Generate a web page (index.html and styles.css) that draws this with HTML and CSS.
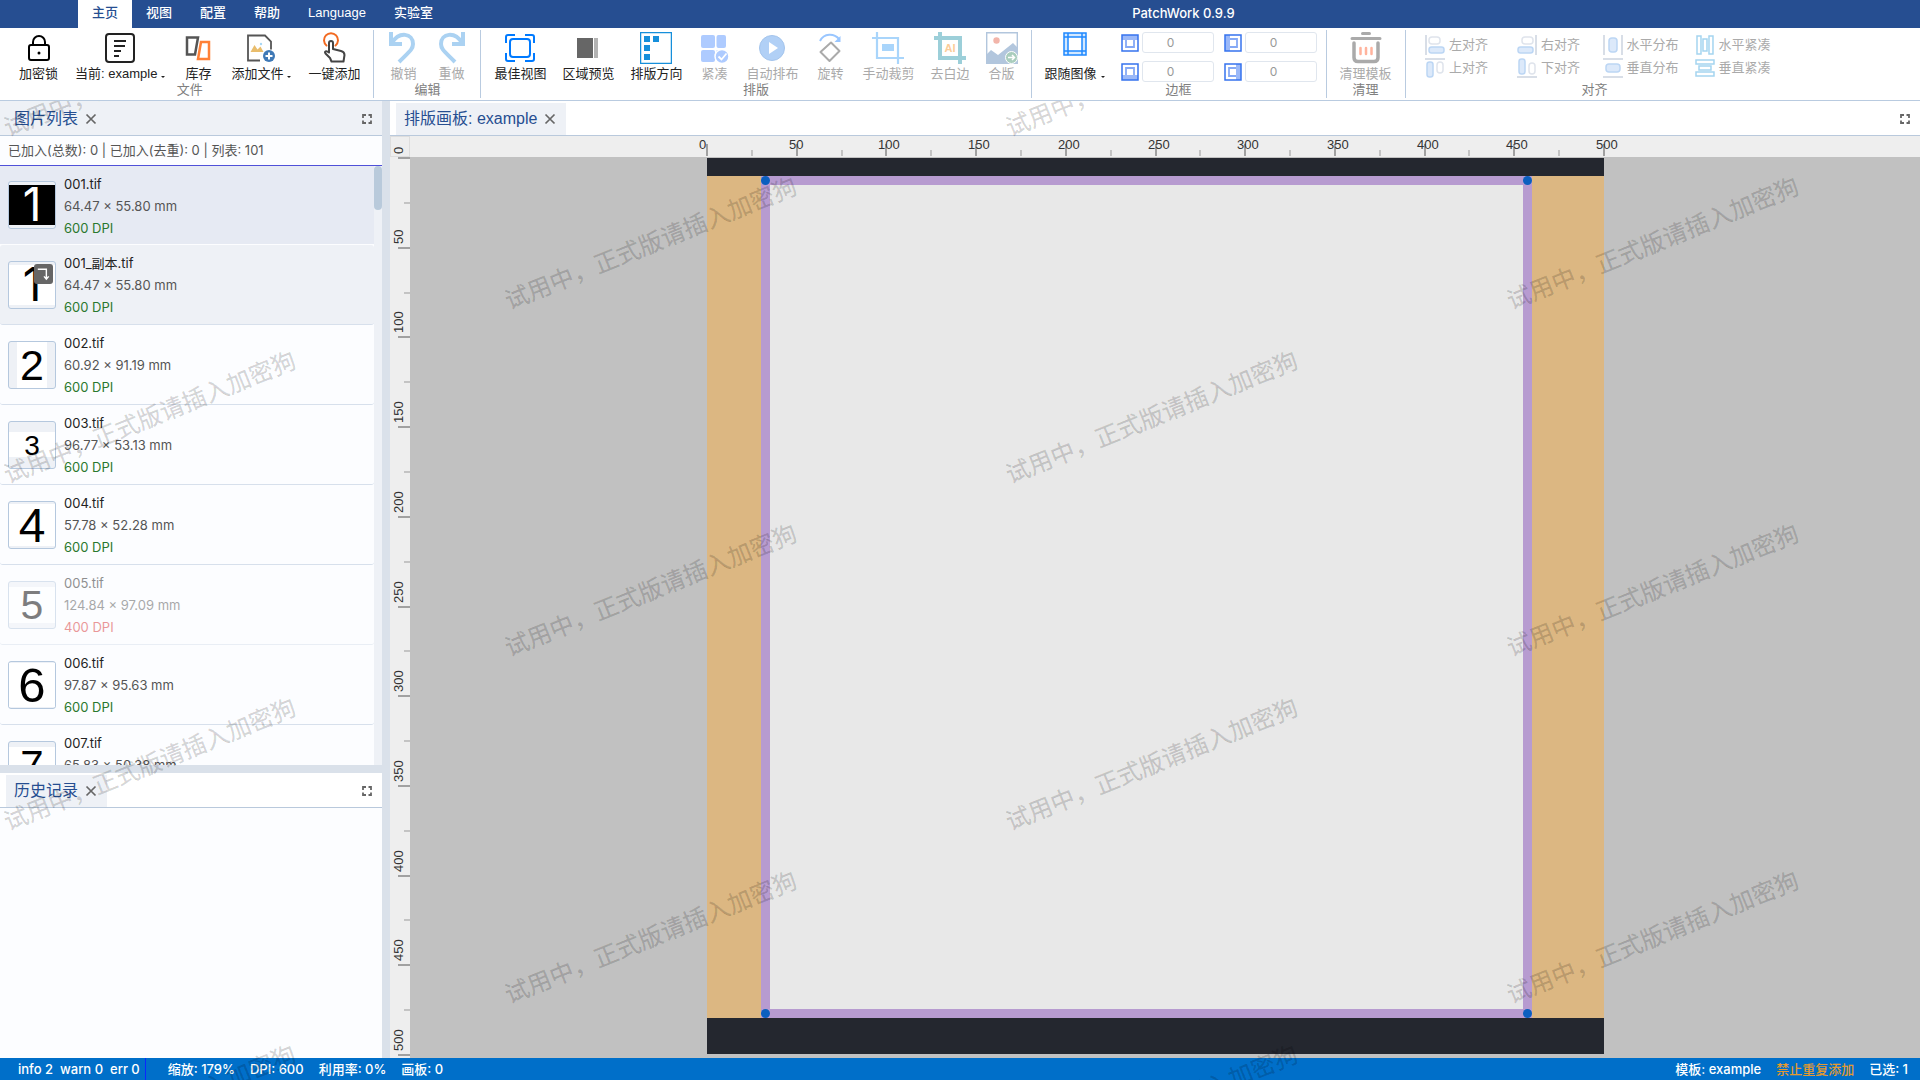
FILE: index.html
```html
<!DOCTYPE html>
<html lang="zh-CN">
  <head>
    <meta charset="UTF-8" />
    <meta name="viewport" content="width=device-width, initial-scale=1.0" />
    <title>PatchWork 0.9.9</title>
    <link rel="stylesheet" href="styles.css">
  </head>
  <body>
    <svg class="defs" aria-hidden="true">
      <symbol id="close" viewBox="0 0 12 12"><path d="M1.500 1.500l9 9M10.500 1.500l-9 9" fill="none" stroke="#666" stroke-width="1.700"/></symbol>
      <symbol id="expand" viewBox="0 0 12 12"><path d="M5 2H2v3M7.500 2H10v3M5 10H2V7.500M7.500 10H10V7.500" fill="none" stroke="#666" stroke-width="1.800"/></symbol>
    </svg>

    <!-- Menu bar -->
    <header class="menubar">
      <nav class="menu">
        <button class="menu-tab active">主页</button>
        <button class="menu-tab">视图</button>
        <button class="menu-tab">配置</button>
        <button class="menu-tab">帮助</button>
        <button class="menu-tab">Language</button>
        <button class="menu-tab">实验室</button>
      </nav>
      <div class="app-title">PatchWork 0.9.9</div>
    </header>

    <!-- Ribbon -->
    <div class="ribbon">
      <section class="group group-file">
        <div class="tools">
          <button class="tool">
            <svg viewBox="0 0 32 32" fill="none" stroke="#000" stroke-width="2"><rect x="6" y="13" width="20" height="15" rx="2"/><path d="M10 13v-3a6 6 0 0 1 12 0v3"/><circle cx="16" cy="21" r="1.500" fill="#000" stroke="none"/></svg>
            <span>加密锁</span>
          </button>
          <button class="tool">
            <svg viewBox="0 0 32 32" fill="none" stroke="#222" stroke-width="2"><rect x="2" y="2" width="28" height="28" rx="3"/><path d="M10 9h12M10 14h11M10 19h7M10 24h5"/></svg>
            <span class="drop">当前: example</span>
          </button>
          <button class="tool">
            <svg viewBox="0 0 32 32" fill="none" stroke-width="2.500"><path d="M5 5.500h11L13 22.500H5z" stroke="#555"/><path d="M19 10h8v17H16z" stroke="#ff8036"/></svg>
            <span>库存</span>
          </button>
          <button class="tool">
            <svg viewBox="0 0 32 32" fill="none"><path d="M15 28.500H3v-25h17l6 6v8" stroke="#555" stroke-width="1.800"/><path d="M5.500 20l4-7 3 4.500 3-3 3 5.500z" fill="#e9bd6c"/><circle cx="16" cy="12" r="1.200" fill="#a8d8f5"/><circle cx="24" cy="24" r="6" fill="#3f79b6"/><path d="M24 20.500v7M20.500 24h7" stroke="#fff" stroke-width="2"/></svg>
            <span class="drop">添加文件</span>
          </button>
          <button class="tool">
            <svg viewBox="0 0 32 32" fill="none" stroke-linejoin="round" stroke-linecap="round"><path d="M8.500 13.500a7 7 0 1 1 9 0" stroke="#f26a21" stroke-width="2"/><path d="M11 20.500V11a2 2 0 0 1 4 0v6l8 2c2.500.6 3.500 2 3.500 4l-1 6.500H13.500L12 26l-4.500-4.500c-1.500-2 .5-3.500 3.500-1z" fill="#fff" stroke="#444" stroke-width="2"/></svg>
            <span>一键添加</span>
          </button>
        </div>
        <h2 class="group-name">文件</h2>
      </section>

      <section class="group">
        <div class="tools">
          <button class="tool" disabled>
            <svg viewBox="0 0 32 32" fill="none" stroke="#abd2f2" stroke-width="4"><path d="M4 0v12h11M5 11C12-1 26 1 26 12c0 5-3 7-14 18"/></svg>
            <span>撤销</span>
          </button>
          <button class="tool" disabled>
            <svg viewBox="0 0 32 32" fill="none" stroke="#abd2f2" stroke-width="4"><path d="M28 0v12H17M27 11C20-1 6 1 6 12c0 5 3 7 14 18"/></svg>
            <span>重做</span>
          </button>
        </div>
        <h2 class="group-name">编辑</h2>
      </section>

      <section class="group">
        <div class="tools">
          <button class="tool">
            <svg viewBox="0 0 32 32" fill="none" stroke="#007aff" stroke-width="2"><rect x="6" y="7" width="20" height="18" rx="3"/><path d="M2 11V5q0-2 2-2h7M21 3h7q2 0 2 2v6M2 21v6q0 2 2 2h7M21 29h7q2 0 2-2v-6"/></svg>
            <span>最佳视图</span>
          </button>
          <button class="tool">
            <svg viewBox="0 0 32 32"><path d="M5 6h16v20H5z" fill="#666"/><path d="M22 6h4v20h-4z" fill="#b3b3b3"/></svg>
            <span>区域预览</span>
          </button>
          <button class="tool">
            <svg viewBox="0 0 32 32"><path d="M.5.500h31v31H.5z" fill="none" stroke="#168fdb" stroke-width="1.500"/><path d="M4 4h6v6H4zM13 4h6v6h-6zM4 13h6v6H4zM4 22h6v6H4z" fill="#168fdb"/></svg>
            <span>排版方向</span>
          </button>
          <button class="tool" disabled>
            <svg viewBox="0 0 32 32" fill="#aecbff"><rect x="3" y="3" width="14" height="13" rx="2"/><rect x="18.500" y="3" width="9.500" height="13" rx="2"/><rect x="3" y="18" width="14" height="12" rx="2"/><rect x="18" y="18" width="9" height="6" rx="2"/><circle cx="24" cy="24.500" r="7" stroke="#fff" stroke-width="1.500"/><path d="M20.500 24.500l3 3 5-6" fill="none" stroke="#fff" stroke-width="1.800"/></svg>
            <span>紧凑</span>
          </button>
          <button class="tool" disabled>
            <svg viewBox="0 0 32 32"><circle cx="16" cy="16" r="12.500" fill="#b1d0f6" stroke="#a3c4ec"/><path d="M13 10l9 6-9 6z" fill="#fff"/></svg>
            <span>自动排布</span>
          </button>
          <button class="tool" disabled>
            <svg viewBox="0 0 32 32" fill="none" stroke-width="2"><path d="M6 9C10 1 20 1 25 7" stroke="#99c6ff"/><path d="M26.500 4v6h-6z" fill="#99c6ff"/><path d="M17 10.500l8.500 8.500-10 10L6.500 20z" stroke="#aaa" stroke-linejoin="round"/></svg>
            <span>旋转</span>
          </button>
          <button class="tool" disabled>
            <svg viewBox="0 0 32 32"><path d="M0 6h26v26M5 0v26h27" fill="none" stroke="#a9d5fb" stroke-width="2.200"/><path d="M10 12h12v7H10z" fill="#a9d5fb"/></svg>
            <span>手动裁剪</span>
          </button>
          <button class="tool" disabled>
            <svg viewBox="0 0 32 32"><path d="M0 6h26v26M6 0v26h26" fill="none" stroke="#9ccfd9" stroke-width="4"/><text x="16" y="20" class="icon-text">AI</text></svg>
            <span>去白边</span>
          </button>
          <button class="tool" disabled>
            <svg viewBox="0 0 32 32"><path d="M.7.700h30.600v30.600H.7z" fill="#fff" stroke="#b2c6dd" stroke-width="1.400"/><path d="M0 23l5-5 7 5 15-12 5 5v16H0z" fill="#b2c6dd"/><circle cx="10.500" cy="8.500" r="3.200" fill="#f2b5aa"/><circle cx="25.500" cy="25.500" r="6" fill="#a9cdbd" stroke="#fff"/><path d="M22 25.500h6M26 23l2.500 2.500L26 28" fill="none" stroke="#fff" stroke-width="1.500"/></svg>
            <span>合版</span>
          </button>
        </div>
        <h2 class="group-name">排版</h2>
      </section>

      <section class="group">
        <div class="tools">
          <button class="tool tool-follow">
            <svg viewBox="0 0 24 24"><path d="M1 1h22v22H1z" fill="#d3e8ff"/><path d="M5 5h14v14H5z" fill="#fff"/><path d="M1 1h22v22H1zM5 1v22M19 1v22M1 5h22M1 19h22" fill="none" stroke="#1e88ff" stroke-width="1.500"/></svg>
            <span class="drop">跟随图像</span>
          </button>
          <div class="border-fields">
            <label class="border-field"><svg viewBox="0 0 18 18" class="side-icon"><path d="M5 5h8v8H5z" class="side-inner"/><path d="M1 1h16v5H1z" class="side-fill"/><path d="M1 1h16v16H1z" class="side-frame"/></svg><input type="text" value="0" aria-label="上边框"></label>
            <label class="border-field"><svg viewBox="0 0 18 18" class="side-icon"><path d="M5 5h8v8H5z" class="side-inner"/><path d="M1 1h5v16H1z" class="side-fill"/><path d="M1 1h16v16H1z" class="side-frame"/></svg><input type="text" value="0" aria-label="左边框"></label>
            <label class="border-field"><svg viewBox="0 0 18 18" class="side-icon"><path d="M5 5h8v8H5z" class="side-inner"/><path d="M1 12h16v5H1z" class="side-fill"/><path d="M1 1h16v16H1z" class="side-frame"/></svg><input type="text" value="0" aria-label="下边框"></label>
            <label class="border-field"><svg viewBox="0 0 18 18" class="side-icon"><path d="M5 5h8v8H5z" class="side-inner"/><path d="M12 1h5v16h-5z" class="side-fill"/><path d="M1 1h16v16H1z" class="side-frame"/></svg><input type="text" value="0" aria-label="右边框"></label>
          </div>
        </div>
        <h2 class="group-name">边框</h2>
      </section>

      <section class="group">
        <div class="tools">
          <button class="tool" disabled>
            <svg viewBox="0 0 32 32" fill="none" stroke="#aaa" stroke-width="3" stroke-linecap="round"><path d="M12.500 1.500h7M2 6.500h28" /><path d="M4 11v14.500q0 4 4 4h16q4 0 4-4V11" stroke-width="3.500"/><path d="M10.500 16v6M16 16v6M21.500 16v6" stroke="#ffb39d" stroke-width="2.500"/></svg>
            <span>清理模板</span>
          </button>
        </div>
        <h2 class="group-name">清理</h2>
      </section>

      <section class="group group-align">
        <div class="align-grid">
          <button disabled><svg viewBox="0 0 20 20"><path d="M1 0v20" class="bar"/><rect x="4" y="2" width="11" height="7" rx="3" class="hollow"/><rect x="4" y="12" width="15" height="6" rx="2.500" class="solid"/></svg>左对齐</button>
          <button disabled><svg viewBox="0 0 20 20"><path d="M19 0v20" class="bar"/><rect x="5" y="2" width="11" height="7" rx="3" class="hollow"/><rect x="1" y="12" width="15" height="6" rx="2.500" class="solid"/></svg>右对齐</button>
          <button disabled><svg viewBox="0 0 20 20"><path d="M1 0v20M19 0v20" class="bar"/><rect x="6" y="3" width="8" height="14" rx="3" class="solid"/></svg>水平分布</button>
          <button disabled><svg viewBox="0 0 20 20" class="tight"><path d="M2 1h4v18H2zM14 1h4v18h-4zM8 4h4v12H8z"/></svg>水平紧凑</button>
          <button disabled><svg viewBox="0 0 20 20"><path d="M0 1h20" class="bar"/><rect x="2" y="4" width="6" height="15" rx="2.500" class="solid"/><rect x="12" y="4" width="6" height="11" rx="3" class="hollow"/></svg>上对齐</button>
          <button disabled><svg viewBox="0 0 20 20"><path d="M0 19h20" class="bar"/><rect x="2" y="1" width="6" height="15" rx="2.500" class="solid"/><rect x="12" y="5" width="6" height="11" rx="3" class="hollow"/></svg>下对齐</button>
          <button disabled><svg viewBox="0 0 20 20"><path d="M0 1h20M0 19h20" class="bar"/><rect x="3" y="6" width="14" height="8" rx="3" class="solid"/></svg>垂直分布</button>
          <button disabled><svg viewBox="0 0 20 20" class="tight"><path d="M1 2h18v4H1zM1 14h18v4H1zM4 8h12v4H4z"/></svg>垂直紧凑</button>
        </div>
        <h2 class="group-name">对齐</h2>
      </section>
    </div>

    <!-- Docked panels -->
    <main class="workspace">
      <aside class="side">
        <section class="panel panel-images">
          <div class="panel-head focused">
            <div class="tab"><span>图片列表</span><button class="icon-btn" aria-label="关闭"><svg><use href="#close"/></svg></button></div>
            <button class="icon-btn" aria-label="最大化"><svg><use href="#expand"/></svg></button>
          </div>
          <p class="summary">已加入(总数): 0 | 已加入(去重): 0 | 列表: 101</p>
          <div class="list-area">
            <ul class="file-list" id="fileList"></ul>
            <div class="scrollbar"><div class="scroll-thumb"></div></div>
          </div>
        </section>
        <section class="panel panel-history">
          <div class="panel-head">
            <div class="tab"><span>历史记录</span><button class="icon-btn" aria-label="关闭"><svg><use href="#close"/></svg></button></div>
            <button class="icon-btn" aria-label="最大化"><svg><use href="#expand"/></svg></button>
          </div>
        </section>
      </aside>

      <section class="panel editor">
        <div class="panel-head">
          <div class="tab"><span>排版画板: example</span><button class="icon-btn" aria-label="关闭"><svg><use href="#close"/></svg></button></div>
          <button class="icon-btn" aria-label="最大化"><svg><use href="#expand"/></svg></button>
        </div>
        <div class="canvas">
          <div class="corner"></div>
          <svg class="ruler ruler-x" id="rulerX"></svg>
          <svg class="ruler ruler-y" id="rulerY"></svg>
          <div class="stage">
            <div class="board">
              <div class="bed">
                <div class="sheet">
                  <i class="handle top left"></i>
                  <i class="handle top right"></i>
                  <i class="handle bottom left"></i>
                  <i class="handle bottom right"></i>
                </div>
              </div>
            </div>
          </div>
        </div>
      </section>
    </main>

    <footer class="statusbar">
      <div class="log"><span>info 2</span><span>warn 0</span><span>err 0</span></div>
      <div class="stats"><span>缩放: 179%</span><span>DPI: 600</span><span>利用率: 0%</span><span>画板: 0</span></div>
      <div class="stats stats-right"><span>模板: example</span><span class="warning">禁止重复添加</span><span>已选: 1</span></div>
    </footer>

    <div class="watermarks" id="watermarks" aria-hidden="true"></div>

    <script>
      // glyph, font size and the area the image covers in the 46px thumb
      const files = [
        { name: "001.tif", size: "64.47 × 55.80 mm", dpi: 600, glyph: "1", font: 46, box: [0, 3, 46, 40], state: "selected" },
        { name: "001_副本.tif", size: "64.47 × 55.80 mm", dpi: 600, glyph: "1", font: 46, box: [0, 3, 46, 40], state: "copy" },
        { name: "002.tif", size: "60.92 × 91.19 mm", dpi: 600, glyph: "2", font: 43, box: [8, 0, 30, 46] },
        { name: "003.tif", size: "96.77 × 53.13 mm", dpi: 600, glyph: "3", font: 28, box: [0, 10, 46, 25] },
        { name: "004.tif", size: "57.78 × 52.28 mm", dpi: 600, glyph: "4", font: 48, box: [0, 2, 46, 42] },
        { name: "005.tif", size: "124.84 × 97.09 mm", dpi: 400, glyph: "5", font: 41, box: [0, 5, 46, 36], state: "skipped" },
        { name: "006.tif", size: "97.87 × 95.63 mm", dpi: 600, glyph: "6", font: 49, box: [0, 1, 46, 44] },
        { name: "007.tif", size: "65.83 × 50.38 mm", dpi: 600, glyph: "7", font: 42, box: [0, 5, 46, 36] },
      ];

      document.getElementById("fileList").innerHTML = files.map((f) => {
        const [x, y, w, h] = f.box;
        const baseline = Math.round(23 + f.font * 0.35);
        const badge = f.state === "copy"
          ? '<svg class="copy-badge" viewBox="0 0 20 20"><path d="M4 5h9v10M10.500 12.500l2.500 3 2.500-3" fill="none" stroke="#fff" stroke-width="1.500"/></svg>'
          : "";
        return `
          <li class="file ${f.state || ""}">
            <div class="thumb">
              <svg viewBox="0 0 46 46">
                <rect x="${x}" y="${y}" width="${w}" height="${h}" class="thumb-bg"/>
                <text x="23" y="${baseline}" font-size="${f.font}">${f.glyph}</text>
              </svg>${badge}
            </div>
            <div class="file-info">
              <div class="file-name">${f.name}</div>
              <div class="file-size">${f.size}</div>
              <div class="file-dpi ${f.dpi < 600 ? "low" : ""}">${f.dpi} DPI</div>
            </div>
          </li>`;
      }).join("");

      // Rulers: a label every 50 mm, a short tick every 25 mm
      const boardPx = 897;
      const originX = 297;
      const originY = 1;
      let rulerX = "";
      let rulerY = "";
      for (let mm = 0; mm <= 500; mm += 25) {
        const offset = Math.round((mm * boardPx) / 500);
        const major = mm % 50 === 0;
        const cls = major ? "major" : "minor";
        const x = originX + offset;
        const y = originY + offset;
        rulerX += `<path class="${cls}" d="M${x} ${major ? 8 : 14}V20"/>`;
        rulerY += `<path class="${cls}" d="M${major ? 8 : 14} ${y}H20"/>`;
        if (major) {
          rulerX += `<text x="${x - 8}" y="13">${mm}</text>`;
          rulerY += `<text transform="translate(13 ${y - 4}) rotate(-90)">${mm}</text>`;
        }
      }
      document.getElementById("rulerX").innerHTML = rulerX;
      document.getElementById("rulerY").innerHTML = rulerY;

      // Trial watermark, staggered over the whole workspace
      const marks = document.getElementById("watermarks");
      let html = "";
      for (let col = 0; 150 + col * 501 < marks.clientWidth + 160; col++) {
        for (let y = col % 2 ? 143 : -30; y < marks.clientHeight + 80; y += 347) {
          html += `<span style="left:${150 + col * 501}px;top:${y}px">试用中，正式版请插入加密狗</span>`;
        }
      }
      marks.innerHTML = html;
    </script>
  </body>
</html>
```
FILE: styles.css
```css
* {
  box-sizing: border-box;
}
body {
  display: flex;
  flex-direction: column;
  height: 100vh;
  margin: 0;
  overflow: hidden;
  position: relative;
  background: #fff;
  color: #222;
  font-family: "Liberation Sans", "Noto Sans CJK SC", sans-serif;
  font-size: 13px;
  line-height: 20px;
}
button {
  padding: 0;
  border: 0;
  background: none;
  color: inherit;
  font: inherit;
}
.defs {
  position: absolute;
  width: 0;
  height: 0;
}

/* menu bar */
.menubar {
  display: flex;
  flex: none;
  height: 28px;
  padding-left: 78px;
  background: #264e91;
  color: #fff;
}
.menu {
  display: flex;
}
.menu-tab {
  padding: 0 14px 2px;
  font-weight: 500;
}
.menu-tab.active {
  background: #fff;
  color: #264e91;
}
.app-title {
  flex: 1;
  text-align: center;
  line-height: 27px;
  font-family: Inter, sans-serif;
  font-weight: 500;
}

/* ribbon */
.ribbon {
  display: flex;
  flex: none;
  height: 73px;
  border-bottom: 1px solid #b9cbe0;
}
.group {
  height: 68px;
  margin-top: 2px;
  padding: 2px 13px 0;
  border-right: 1px solid #b9cbe0;
}
.group-file {
  padding-left: 19px;
}
.group-align {
  border-right: 0;
}
.tools {
  display: flex;
  gap: 16px;
  height: 52px;
}
.group-file .tools {
  gap: 17px;
}
.tool {
  display: flex;
  flex-direction: column;
  align-items: center;
  min-width: 32px;
  white-space: nowrap;
}
.tool svg {
  width: 32px;
  height: 32px;
}
.tool-follow svg {
  width: 24px;
  height: 24px;
  margin-bottom: 8px;
}
.tool:disabled,
.align-grid button {
  color: #aaa;
}
.drop::after {
  content: "";
  display: inline-block;
  margin-left: 4px;
  border: 2px solid transparent;
  border-top-color: #222;
  border-bottom: 0;
}
.icon-text {
  fill: #fbcc99;
  font-size: 11px;
  font-weight: bold;
  text-anchor: middle;
}
.group-name {
  margin: 0;
  color: #808080;
  font-size: 13px;
  font-weight: 400;
  line-height: 12px;
  text-align: center;
}
.border-fields {
  display: grid;
  grid-template-columns: auto auto;
  align-content: start;
  gap: 8px 10px;
  margin-right: -4px;
}
.border-field {
  display: flex;
  align-items: center;
  gap: 3px;
}
.side-icon {
  width: 18px;
  height: 18px;
}
.side-frame {
  fill: none;
  stroke: #3673ee;
  stroke-width: 1.5;
}
.side-inner {
  fill: none;
  stroke: #85a9f5;
  stroke-width: 1.8;
}
.side-fill {
  fill: #9ab8f8;
}
.border-field input {
  width: 72px;
  height: 21px;
  padding: 0 14px 0 0;
  border: 1px solid #e0e6ee;
  border-radius: 3px;
  background: #fff;
  color: #999;
  font-family: Inter, sans-serif;
  font-size: 12px;
  text-align: center;
}
.align-grid {
  display: grid;
  grid-template-columns: repeat(4, 76px);
  grid-auto-rows: 23px;
  column-gap: 16px;
  height: 52px;
  padding-top: 1px;
}
.align-grid button {
  display: flex;
  align-items: center;
  justify-content: center;
  gap: 4px;
  white-space: nowrap;
}
.align-grid svg {
  width: 20px;
  height: 20px;
}
.bar {
  stroke: #d8dee7;
  stroke-width: 2;
}
.hollow {
  fill: none;
  stroke: #dfe4ec;
  stroke-width: 1.5;
}
.solid {
  fill: #dce9fa;
  stroke: #bcd6f4;
  stroke-width: 1.5;
}
.tight {
  fill: none;
  stroke: #a5d5f0;
  stroke-width: 1.5;
}

/* dock layout */
.workspace {
  display: flex;
  flex: 1;
  min-height: 0;
  gap: 8px;
  background: #dae1ea;
}
.side {
  display: flex;
  flex: none;
  flex-direction: column;
  gap: 8px;
  width: 382px;
}
.panel {
  display: flex;
  flex-direction: column;
  min-height: 0;
  background: #fcfdff;
}
.panel-images {
  flex: 7 0 0;
}
.panel-history {
  flex: 3 0 0;
}
.editor {
  flex: 1;
  min-width: 0;
}
.panel-head {
  display: flex;
  flex: none;
  align-items: center;
  justify-content: space-between;
  height: 35px;
  padding: 2px 9px 0 6px;
  border-bottom: 1px solid #b9c9dc;
  background: #fff;
}
.panel-head.focused,
.tab {
  background: #eef1f6;
}
.tab {
  display: flex;
  align-items: center;
  gap: 7px;
  height: 32px;
  padding: 0 10px 0 8px;
  color: #264e91;
  font-size: 16px;
}
.icon-btn {
  display: flex;
}
.icon-btn svg {
  width: 12px;
  height: 12px;
}

/* image list */
.summary {
  flex: none;
  height: 30px;
  margin: 0;
  padding: 0 8px;
  border-bottom: 1px solid #4f50d8;
  color: #555;
  font-family: Inter, "Noto Sans CJK SC", sans-serif;
  line-height: 29px;
}
.list-area {
  display: flex;
  flex: 1;
  min-height: 0;
}
.file-list {
  flex: 1;
  margin: -1px 0 0;
  padding: 0;
  overflow: hidden;
  list-style: none;
}
.file {
  display: flex;
  align-items: center;
  gap: 8px;
  height: 80px;
  padding: 0 8px;
  border-bottom: 1px solid #d7e0ec;
  border-radius: 3px;
}
.file.selected {
  border-color: #fcfdff;
  border-top: 1px solid #4f50d8;
  border-radius: 0;
  background: #e6eaf3;
}
.file.copy {
  background: #eef1f6;
}
.file.skipped {
  opacity: 0.5;
}
.thumb {
  position: relative;
  width: 48px;
  height: 48px;
  border: 1px solid #b5c8de;
  border-radius: 3px;
  background: #eef1f6;
}
.thumb svg {
  display: block;
}
.thumb text {
  fill: #000;
  text-anchor: middle;
}
.selected text,
.copy text {
  font-family: Inter, sans-serif;
}
.thumb-bg {
  fill: #fff;
}
.selected .thumb-bg {
  fill: #000;
}
.selected .thumb text {
  fill: #fff;
}
.copy-badge {
  position: absolute;
  top: 2px;
  right: 2px;
  width: 19px;
  height: 20px;
  border-radius: 3px;
  background: #666;
}
.file-info {
  padding-top: 1px;
  font-family: Inter, "Noto Sans CJK SC", sans-serif;
  font-size: 13px;
  line-height: 22px;
}
.file-size {
  color: #555;
}
.file-dpi {
  color: #2a782e;
}
.file-dpi.low {
  color: #d83434;
}
.scrollbar {
  width: 8px;
  background: #eef1f6;
}
.scroll-thumb {
  height: 44px;
  border-radius: 4px;
  background: #b9cadb;
}

/* artboard */
.canvas {
  display: grid;
  flex: 1;
  grid-template-columns: 20px 1fr;
  grid-template-rows: 21px 1fr;
  min-height: 0;
  background: #eee;
}
.corner {
  border: 1px solid #ddd;
}
.ruler {
  width: 100%;
  height: 100%;
  min-height: 0;
  overflow: visible;
}
.ruler text {
  fill: #333;
  font-size: 13px;
}
.major {
  stroke: #555;
  stroke-width: 1;
}
.minor {
  stroke: #999;
  stroke-width: 1;
}
.stage {
  position: relative;
  overflow: hidden;
  background: #c1c1c1;
}
.board {
  position: absolute;
  top: 1px;
  left: 297px;
  width: 897px;
  height: 896px;
  padding: 18px 0 36px;
  background: #24272f;
}
.bed {
  height: 100%;
  padding: 0 72px 0 54px;
  background: #dcb782;
}
.sheet {
  position: relative;
  height: 100%;
  border: 9px solid #b79bd0;
  background: #e8e8e8;
}
.handle {
  position: absolute;
  width: 9px;
  height: 9px;
  border-radius: 50%;
  background: #0b5fbf;
}
.handle.top {
  top: -9px;
}
.handle.bottom {
  bottom: -9px;
}
.handle.left {
  left: -9px;
}
.handle.right {
  right: -9px;
}

/* status bar */
.statusbar {
  display: flex;
  flex: none;
  height: 22px;
  background: #006fc9;
  color: #fff;
  font-family: Inter, "Noto Sans CJK SC", sans-serif;
  font-weight: 500;
  line-height: 22px;
}
.log {
  display: flex;
  gap: 7px;
  padding: 0 5px 0 18px;
  border-right: 1px solid #0a28ff;
}
.stats {
  display: flex;
  gap: 15px;
  padding-left: 22px;
}
.stats-right {
  margin-left: auto;
  padding-right: 12px;
}
.warning {
  color: #e59a2e;
}

/* trial watermark */
.watermarks {
  position: absolute;
  top: 101px;
  right: 0;
  bottom: 0;
  left: 0;
  overflow: hidden;
  pointer-events: none;
}
.watermarks span {
  position: absolute;
  color: rgba(0, 0, 0, 0.16);
  font-size: 24px;
  line-height: 24px;
  white-space: nowrap;
  transform: translate(-50%, -50%) rotate(-22deg);
  -webkit-text-stroke: 0.3px rgba(0, 0, 0, 0.16);
}
```
